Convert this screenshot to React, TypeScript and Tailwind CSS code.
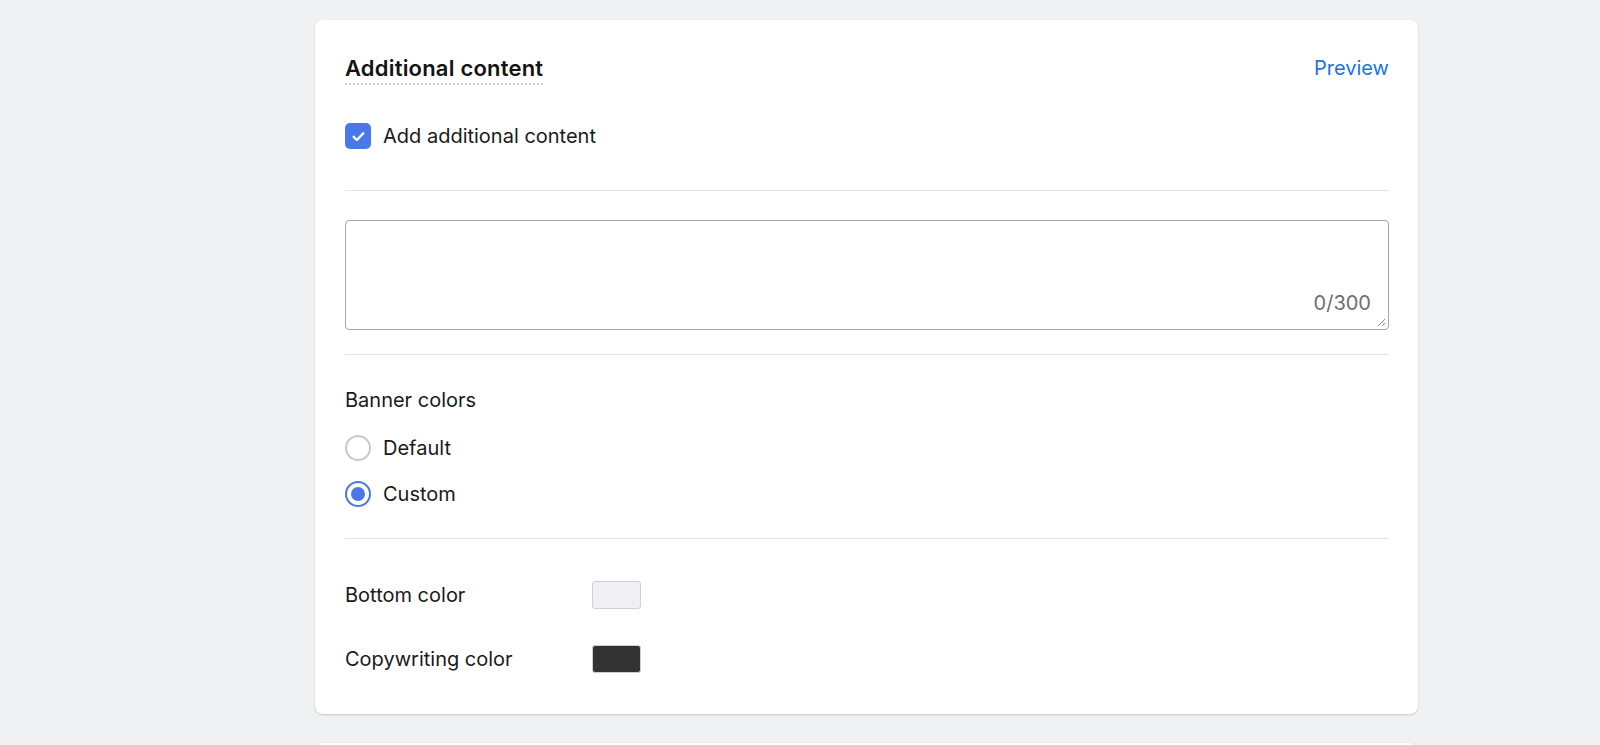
export default function App() {
  return (
    <div className="h-[745px] w-full overflow-hidden bg-[#f0f1f3] font-['Inter',sans-serif] text-[#1a1a1a]">
      <div className="ml-[315px] w-[1103px] pt-5">
        {/* Additional content card */}
        <div className="rounded-lg bg-white pl-[30px] pr-[29px] pb-[41px] pt-[34px] shadow-[0_1px_2px_rgba(0,0,0,0.18)]">
          <div className="flex items-start justify-between">
            <h2 className="border-b-2 border-dotted border-[#c8c8c8] pb-[1px] text-[22px] font-semibold leading-[28px] tracking-[0.2px] text-[#141414]">
              Additional content
            </h2>
            <button className="text-[20px] leading-[28px] text-[#1a73e8]">Preview</button>
          </div>

          <label className="mt-[37px] flex items-center gap-[12px]">
            <span className="flex h-[26px] w-[26px] items-center justify-center rounded-[5px] bg-[#4a78e8]">
              <svg width="15" height="15" viewBox="0 0 14 14" fill="none">
                <path d="M2.5 7.3l3 3 6-6.3" stroke="white" strokeWidth="2.2" strokeLinecap="round" strokeLinejoin="round" />
              </svg>
            </span>
            <span className="text-[20px] leading-[28px]">Add additional content</span>
          </label>

          <div className="mt-[40px] border-t border-[#e2e2e2]" />

          <div className="relative mt-[29px] h-[110px] rounded-[4px] border border-[#a3a6ab]">
            <span className="absolute bottom-[14px] right-[17px] text-[20px] leading-[24px] text-[#6b6e73]">0/300</span>
            <svg className="absolute bottom-[2px] right-[2px]" width="9" height="9" viewBox="0 0 9 9">
              <path d="M8 1L1 8M8 5L5 8" stroke="#8a8a8a" strokeWidth="1" />
            </svg>
          </div>

          <div className="mt-[24px] border-t border-[#e2e2e2]" />

          <div className="mt-[31px] text-[20px] leading-[28px]">Banner colors</div>

          <div className="mt-[20px] flex flex-col gap-[18px]">
            <label className="flex items-center gap-[12px]">
              <span className="h-[26px] w-[26px] rounded-full border-2 border-[#c9c9c9] bg-white" />
              <span className="text-[20px] leading-[28px]">Default</span>
            </label>
            <label className="flex items-center gap-[12px]">
              <span className="flex h-[26px] w-[26px] items-center justify-center rounded-full border-2 border-[#4a78e8] bg-white">
                <span className="h-[14px] w-[14px] rounded-full bg-[#4a78e8]" />
              </span>
              <span className="text-[20px] leading-[28px]">Custom</span>
            </label>
          </div>

          <div className="mt-[30px] border-t border-[#e2e2e2]" />

          <div className="mt-[42px] flex flex-col gap-[36px]">
            <div className="flex items-center">
              <span className="w-[247px] text-[20px] leading-[28px]">Bottom color</span>
              <span className="h-[28px] w-[49px] rounded-[3px] border border-[#d0d0d4] bg-[#efeff4]" />
            </div>
            <div className="flex items-center">
              <span className="w-[247px] text-[20px] leading-[28px]">Copywriting color</span>
              <span className="h-[28px] w-[49px] rounded-[3px] border border-[#cfcfcf] bg-[#333333]" />
            </div>
          </div>
        </div>

        {/* next card peeking */}
        <div className="mt-[29px] h-[40px] rounded-t-lg bg-white shadow-[0_0_1px_rgba(0,0,0,0.15)]" />
      </div>
    </div>
  );
}
